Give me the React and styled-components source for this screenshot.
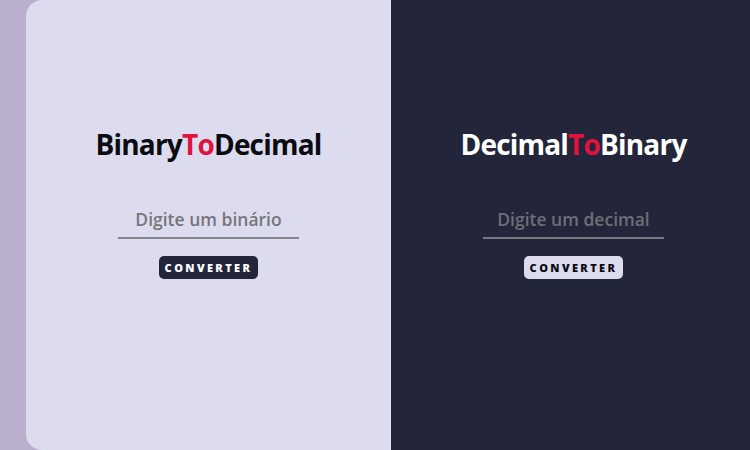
import React from 'react'
import styled, { createGlobalStyle } from 'styled-components'

const GlobalStyle = createGlobalStyle`
    html, body {
        margin: 0;
        padding: 0;
        overflow: hidden;
    }
    * {
        box-sizing: border-box;
    }
`

function Converter({ dark, before, after, placeholder }) {
    return (
        <StPanel $dark={dark}>
            <StTitle $dark={dark}>
                {before}<StAccent>To</StAccent>{after}
            </StTitle>
            <StInput $dark={dark} placeholder={placeholder} spellCheck="false" />
            <StButton $dark={dark}>CONVERTER</StButton>
        </StPanel>
    )
}

export default function App() {
    return (
        <>
            <GlobalStyle />
            <StPage>
                <StStrip />
                <Converter before="Binary" after="Decimal" placeholder="Digite um binário" />
                <Converter dark before="Decimal" after="Binary" placeholder="Digite um decimal" />
            </StPage>
        </>
    )
}

const StPage = styled.div`
    display: flex;
    width: 100vw;
    height: 100vh;
    overflow: hidden;
    background-color: #BAB0CE;
    font-family: "Open Sans", "Noto Sans", sans-serif;
`

const StStrip = styled.div`
    width: 26px;
    flex: none;
`

const StPanel = styled.div`
    flex: 0 0 365px;
    display: flex;
    flex-direction: column;
    align-items: center;
    padding-top: 124px;
    background-color: ${({ $dark }) => $dark ? "#23263A" : "#DCDCEE"};
    border-radius: ${({ $dark }) => $dark ? "0" : "16px 0 0 16px"};
`

const StTitle = styled.h1`
    margin: 0;
    font-size: 28px;
    line-height: 40px;
    font-weight: 700;
    letter-spacing: -0.8px;
    color: ${({ $dark }) => $dark ? "#FFFFFF" : "#0B0B12"};
`

const StAccent = styled.span`
    color: #E0123F;
`

const StInput = styled.input`
    margin-top: 36px;
    width: 181px;
    height: 39px;
    padding: 0;
    border: none;
    border-bottom: 2px solid ${({ $dark }) => $dark ? "#77777F" : "#85858C"};
    background: transparent;
    outline: none;
    text-align: center;
    font-family: inherit;
    font-size: 17.5px;
    font-weight: 600;
    color: #707070;

    &::placeholder {
        color: ${({ $dark }) => $dark ? "#6E6E74" : "#76767A"};
    }
`

const StButton = styled.button`
    margin-top: 17px;
    width: 99px;
    height: 23px;
    padding: 0;
    border: none;
    border-radius: 5px;
    font-family: inherit;
    font-size: 11px;
    font-weight: 800;
    letter-spacing: 2.4px;
    background-color: ${({ $dark }) => $dark ? "#DCDCEE" : "#23263A"};
    color: ${({ $dark }) => $dark ? "#0B0B12" : "#FFFFFF"};
    cursor: pointer;
`
